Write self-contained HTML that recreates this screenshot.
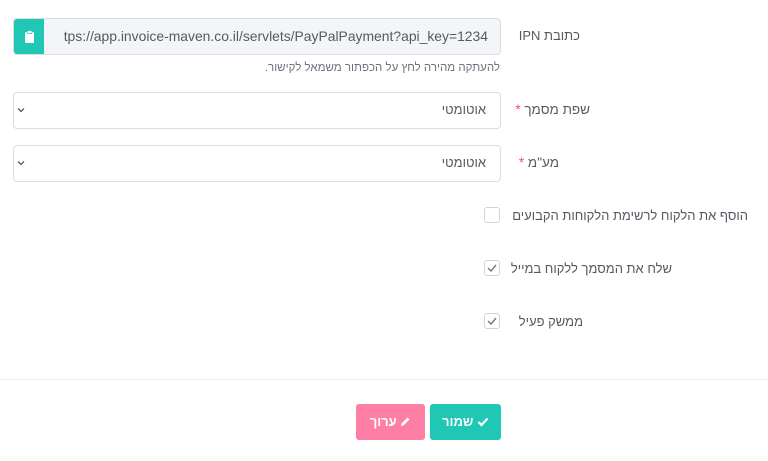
<!DOCTYPE html>
<html><head><meta charset="utf-8"><style>
body{margin:0;width:768px;height:461px;background:#fff;font-family:"Liberation Sans","Noto Sans CJK SC",sans-serif;position:relative;overflow:hidden;color:#575962}
.a{position:absolute}
.lbl{font-size:13px;color:#575962;direction:rtl;text-align:right}
.box{border:1px solid #dcdde3;border-radius:4px;box-sizing:border-box;background:#fff}
.star{color:#f4516c}
.cb{width:16px;height:16px;border:1px solid #d3d4da;border-radius:3px;box-sizing:border-box;background:#fff}
</style></head><body>
<div class="a box" style="left:13px;top:18px;width:488px;height:37px;background:#f4f5f8;overflow:hidden">
 <div class="a" style="left:0;top:0;width:30px;height:37px;background:#1fc7b4"></div>
 <svg class="a" style="left:10px;top:11px" width="11" height="14" viewBox="0 0 11 14"><rect x="1" y="2" width="9" height="11" rx="1" fill="#fff"/><rect x="3" y="0.5" width="5" height="3" rx="1" fill="#fff" stroke="#1fc7b4" stroke-width="0.8"/></svg>
 <div class="a" style="right:12px;top:9px;font-size:13.9px;color:#575962;white-space:nowrap">tps://app.invoice-maven.co.il/servlets/PayPalPayment?api_key=1234</div>
</div>
<div class="a lbl" style="right:188px;top:28px">כתובת IPN</div>
<div class="a lbl" style="right:268px;top:62px;font-size:11.5px;color:#6f727d">להעתקה מהירה לחץ על הכפתור משמאל לקישור.</div>

<div class="a box" style="left:13px;top:92px;width:488px;height:37px"></div>
<div class="a lbl" style="right:282px;top:102px;font-size:13px">אוטומטי</div>
<svg class="a" style="left:17px;top:107px" width="8" height="6" viewBox="0 0 8 6"><path d="M1 1.5L4 4.5L7 1.5" stroke="#575962" stroke-width="1.3" fill="none"/></svg>
<div class="a lbl" style="right:178px;top:102px;font-size:13.5px">שפת מסמך <span class="star">*</span></div>

<div class="a box" style="left:13px;top:145px;width:488px;height:37px"></div>
<div class="a lbl" style="right:282px;top:155px;font-size:13px">אוטומטי</div>
<svg class="a" style="left:17px;top:160px" width="8" height="6" viewBox="0 0 8 6"><path d="M1 1.5L4 4.5L7 1.5" stroke="#575962" stroke-width="1.3" fill="none"/></svg>
<div class="a lbl" style="right:209px;top:155px;font-size:13.5px">מע"מ <span class="star">*</span></div>

<div class="a cb" style="left:484px;top:207px"></div>
<div class="a lbl" style="right:20px;top:208px">הוסף את הלקוח לרשימת הלקוחות הקבועים</div>
<div class="a cb" style="left:484px;top:260px"></div>
<svg class="a" style="left:487px;top:264px" width="10" height="8"><path d="M1 4L4 7L9 1" stroke="#777" stroke-width="1.4" fill="none"/></svg>
<div class="a lbl" style="right:96px;top:261px">שלח את המסמך ללקוח במייל</div>
<div class="a cb" style="left:484px;top:313px"></div>
<svg class="a" style="left:487px;top:317px" width="10" height="8"><path d="M1 4L4 7L9 1" stroke="#777" stroke-width="1.4" fill="none"/></svg>
<div class="a lbl" style="right:185px;top:314px">ממשק פעיל</div>

<div class="a" style="left:0;top:379px;width:768px;height:1px;background:#ebedf2"></div>

<div class="a" style="left:356px;top:404px;width:69px;height:36px;background:#fd7fa5;border-radius:3px;color:#fff;font-size:13px;font-weight:bold;direction:rtl;text-align:center;line-height:36px">
 <svg width="11" height="11" viewBox="0 0 11 11" style="vertical-align:-1px"><path d="M1 10L1.5 7.5L7.5 1.5L9.5 3.5L3.5 9.5Z" fill="#fff"/></svg> ערוך</div>
<div class="a" style="left:430px;top:404px;width:71px;height:36px;background:#1fc7b4;border-radius:3px;color:#fff;font-size:13px;font-weight:bold;direction:rtl;text-align:center;line-height:36px">
 <svg width="12" height="10" viewBox="0 0 12 10" style="vertical-align:-1px"><path d="M1.5 5L4.5 8L10.5 1.5" stroke="#fff" stroke-width="2.2" fill="none"/></svg> שמור</div>
</body></html>
